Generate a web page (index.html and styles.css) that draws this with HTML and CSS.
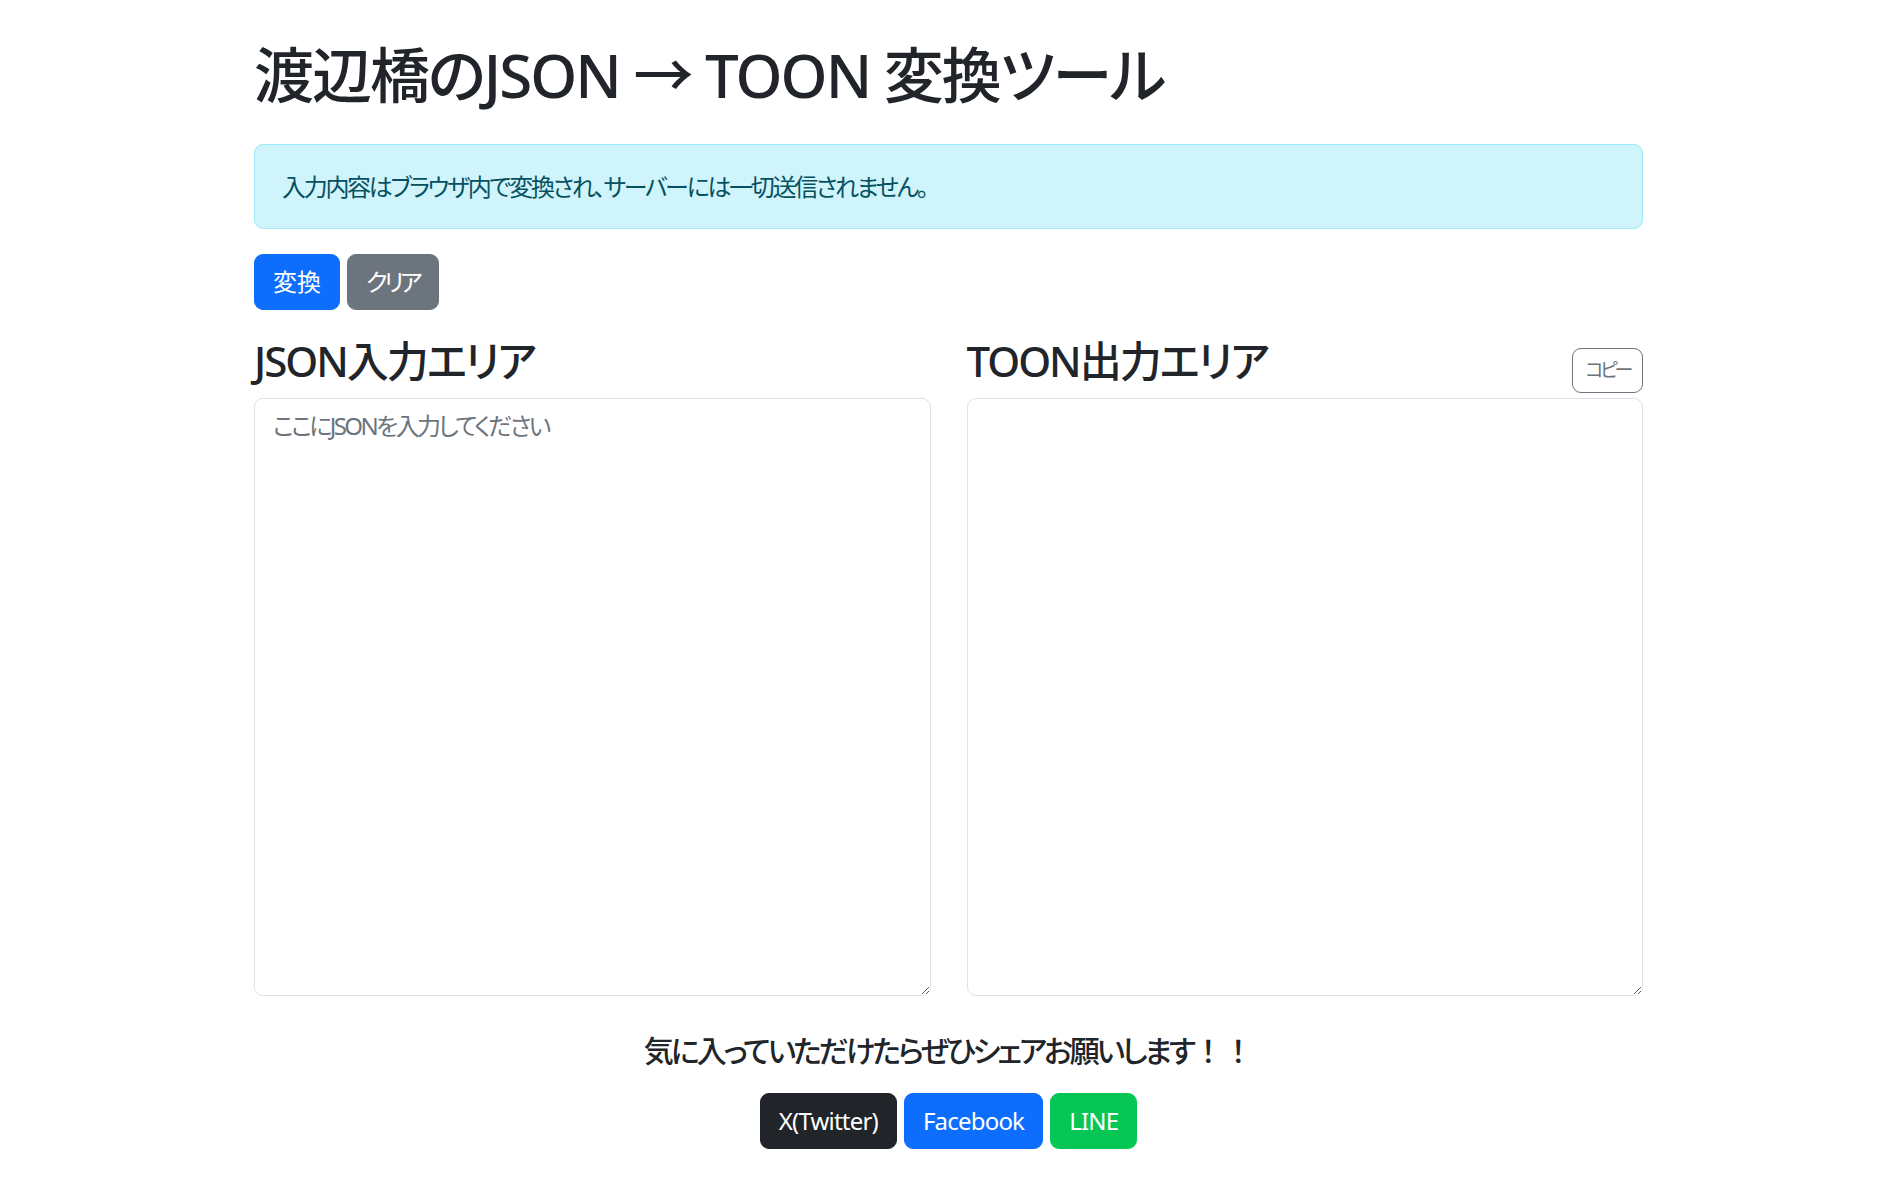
FILE: index.html
```html
<!DOCTYPE html>
<html lang="ja">
<head>
<meta charset="utf-8">
<title>渡辺橋のJSON → TOON 変換ツール</title>
<link rel="stylesheet" href="styles.css">
</head>
<body>
<main class="page">
  <h1 class="title">渡辺橋のJSON → TOON 変換ツール</h1>
  <div class="alert">入力内容はブラウザ内で変換され、サーバーには一切送信されません。</div>
  <div class="actions">
    <button class="btn btn-primary" type="button">変換</button>
    <button class="btn btn-secondary btn-kana" type="button">クリア</button>
  </div>
  <div class="panes">
    <section class="pane">
      <div class="pane-head">
        <h3 class="pane-title">JSON入力エリア</h3>
      </div>
      <textarea class="area" placeholder="ここにJSONを入力してください"></textarea>
    </section>
    <section class="pane">
      <div class="pane-head">
        <h3 class="pane-title">TOON出力エリア</h3>
        <button class="btn-copy" type="button">コピー</button>
      </div>
      <textarea class="area" readonly></textarea>
    </section>
  </div>
  <div class="share">
    <h5 class="share-title">気に入っていただけたらぜひシェアお願いします<span class="fullwidth">！！</span></h5>
    <div class="share-buttons">
      <a class="btn btn-dark btn-latin" href="#">X(Twitter)</a>
      <a class="btn btn-fb btn-latin" href="#">Facebook</a>
      <a class="btn btn-line btn-latin" href="#">LINE</a>
    </div>
  </div>
</main>
</body>
</html>
```

FILE: styles.css
```css
* { box-sizing: border-box; }

html, body {
  margin: 0;
  background: #ffffff;
}

body {
  font-family: "Noto Sans", "Noto Sans CJK JP", sans-serif;
  font-feature-settings: "palt";
  color: #212529;
  font-size: 24px;
  line-height: 36px;
}

.page {
  width: 1396px;
  padding-left: 7px;
  margin: 0 auto;
}

.title {
  font-size: 60px;
  line-height: 72px;
  font-weight: 500;
  letter-spacing: -2px;
  margin: 39px 0 33px;
}

.alert {
  background: #cff4fc;
  border: 1px solid #9eeaf9;
  border-radius: 9px;
  color: #055160;
  padding: 24px 27px 23px;
  margin-bottom: 25px;
  letter-spacing: -2.3px;
}

.actions {
  display: flex;
  gap: 7px;
  margin-bottom: 26px;
}

.btn {
  display: inline-block;
  font: inherit;
  font-feature-settings: "palt";
  font-size: 24px;
  line-height: 36px;
  padding: 9px 18px;
  border: 1px solid transparent;
  border-radius: 9px;
  color: #ffffff;
  text-decoration: none;
  cursor: pointer;
}

.btn-kana { letter-spacing: -3.5px; padding-right: 19px; }
.btn-latin { letter-spacing: -0.8px; }

.btn-primary { background: #0d6efd; border-color: #0d6efd; }
.btn-secondary { background: #6c757d; border-color: #6c757d; }
.btn-dark { background: #212529; border-color: #212529; }
.btn-fb { background: #0d6efd; border-color: #0d6efd; }
.btn-line { background: #06c755; border-color: #06c755; }

.panes {
  display: grid;
  grid-template-columns: 1fr 1fr;
  column-gap: 36px;
}

.pane-head {
  display: flex;
  justify-content: space-between;
  align-items: center;
}

.pane-title {
  font-size: 42px;
  line-height: 50px;
  font-weight: 500;
  letter-spacing: -2px;
  margin: 0 0 12px;
}

.btn-copy {
  font: inherit;
  font-feature-settings: "palt";
  font-size: 19px;
  line-height: 31px;
  letter-spacing: -3.3px;
  padding: 6px 12px 6px 12px;
  margin-top: 6px;
  background: transparent;
  color: #6c757d;
  border: 1px solid #6c757d;
  border-radius: 9px;
}

.area {
  display: block;
  width: 100%;
  height: 598px;
  padding: 9px 18px;
  font: inherit;
  font-feature-settings: "palt";
  font-size: 24px;
  line-height: 36px;
  letter-spacing: -2.6px;
  color: #212529;
  border: 1px solid #dee2e6;
  border-radius: 9px;
  background: #ffffff;
  outline: none;
}

.area::placeholder {
  color: #6c757d;
  opacity: 1;
}

.share {
  text-align: center;
  margin-top: 37px;
}

.share-title {
  font-size: 30px;
  line-height: 36px;
  font-weight: 500;
  letter-spacing: -3px;
  margin: 0 0 24px;
}

.fullwidth {
  font-feature-settings: normal;
  letter-spacing: 0;
}

.share-buttons {
  display: flex;
  justify-content: center;
  gap: 7px;
}
```
